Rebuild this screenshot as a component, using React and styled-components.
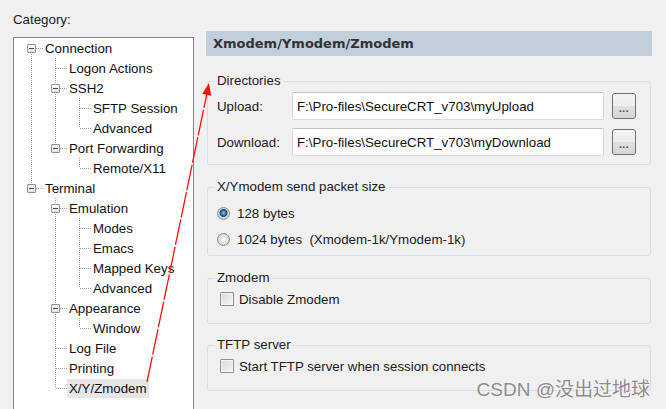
import React from 'react';
import styled, { createGlobalStyle } from 'styled-components';

const GlobalStyle = createGlobalStyle`
  html, body {
    margin: 0;
    padding: 0;
    background: #f0f0f0;
    overflow: hidden;
  }
  body {
    font-family: "Liberation Sans", Arial, sans-serif;
    font-size: 13.3px;
    color: #1b1b1b;
  }
`;

const Window = styled.div`
  position: relative;
  width: 666px;
  height: 409px;
  box-sizing: border-box;
  padding: 12px 0 0 13px;
  display: grid;
  grid-template-columns: 181px 446px;
  column-gap: 12px;
  align-items: start;
  overflow: hidden;
`;

const LeftColumn = styled.div`
  display: flex;
  flex-direction: column;
`;

const Caption = styled.div`
  line-height: 16px;
  height: 16px;
`;

const TreeBox = styled.div`
  margin-top: 9px;
  height: 390px;
  background: #fff;
  border: 1px solid #828790;
  box-sizing: border-box;
`;

const TreeRow = styled.div`
  display: flex;
  align-items: center;
  height: 20px;
  padding-left: 5px;
`;

const dotsV = 'repeating-linear-gradient(to bottom, #a0a0a0 0 1px, transparent 1px 2px)';
const dotsH = 'repeating-linear-gradient(to right, #a0a0a0 0 1px, transparent 1px 2px)';

const Guide = styled.span`
  flex: none;
  width: 24px;
  height: 20px;
  background: ${p => (p.$line ? dotsV : 'none')};
  background-size: 1px 100%;
  background-repeat: no-repeat;
  background-position: 12px 0;
`;

const Connector = styled.span`
  position: relative;
  flex: none;
  width: 24px;
  height: 20px;
  &::before {
    content: '';
    position: absolute;
    left: 12px;
    width: 1px;
    top: ${p => (p.$first ? '10px' : '0')};
    bottom: ${p => (p.$last ? '10px' : '0')};
    background: ${dotsV};
  }
  &::after {
    content: '';
    position: absolute;
    left: 13px;
    right: 0;
    top: 10px;
    height: 1px;
    background: ${dotsH};
  }
`;

const Expander = styled.span`
  position: absolute;
  z-index: 1;
  left: 8px;
  top: 6px;
  width: 7px;
  height: 7px;
  border: 1px solid #919191;
  border-radius: 1px;
  background: linear-gradient(#ffffff, #e2e2e2);
  &::after {
    content: '';
    position: absolute;
    left: 1px;
    top: 3px;
    width: 5px;
    height: 1px;
    background: #2c4a6e;
  }
`;

const NodeLabel = styled.span`
  padding: 0 2px;
  line-height: 19px;
  color: #111;
  white-space: nowrap;
  background: ${p => (p.$selected ? '#e6e6e6' : 'transparent')};
`;

const RightColumn = styled.div`
  display: flex;
  flex-direction: column;
  margin-top: 19px;
`;

const PageHeader = styled.div`
  height: 25px;
  line-height: 25px;
  padding-left: 7px;
  background: #c1cedb;
  font-family: "DejaVu Sans", Verdana, sans-serif;
  font-weight: bold;
  font-size: 13px;
  color: #333;
`;

const GroupBox = styled.section`
  margin: ${p => p.$top}px 1px 0 1px;
  padding: 0 14px ${p => p.$pb}px 9px;
  border: 1px solid #d5dfe5;
  border-radius: 3px;
`;

const GroupTitle = styled.div`
  display: table;
  margin: -9px 0 0 -2px;
  padding: 0 2px;
  line-height: 16px;
  background: #f0f0f0;
  color: #1b1b1b;
`;

const GroupBody = styled.div`
  padding-top: ${p => p.$pt}px;
`;

const PathRow = styled.div`
  display: grid;
  grid-template-columns: 67px 312px 24px;
  column-gap: 8px;
  align-items: center;
  & + & {
    margin-top: 8px;
  }
`;

const FieldLabel = styled.label`
  color: #1b1b1b;
`;

const PathInput = styled.input`
  box-sizing: border-box;
  height: 28px;
  width: 100%;
  margin: 0;
  padding: 0 4px;
  border: 1px solid #dadada;
  border-top-color: #c4c4c4;
  border-radius: 2px;
  background: #fff;
  font: inherit;
  color: #111;
  outline: none;
`;

const BrowseButton = styled.button`
  box-sizing: border-box;
  width: 24px;
  height: 26px;
  margin: 0;
  padding: 0 0 4px;
  border: 1px solid #707070;
  border-radius: 3px;
  background: linear-gradient(#f4f4f4, #eeeeee 50%, #e0e0e0 50%, #d6d6d6);
  font-family: "Liberation Sans", Arial, sans-serif;
  font-size: 10px;
  font-weight: bold;
  letter-spacing: 0.5px;
  color: #3a3f6a;
  display: flex;
  align-items: flex-end;
  justify-content: center;
`;

const OptionRow = styled.label`
  display: flex;
  align-items: center;
  height: 20px;
  white-space: pre;
  color: #1b1b1b;
  & + & {
    margin-top: 6px;
  }
`;

const Radio = styled.input.attrs({ type: 'radio' })`
  appearance: none;
  flex: none;
  width: 13px;
  height: 13px;
  margin: 0 7px 0 0;
  border: 1px solid #8c8c8c;
  border-radius: 50%;
  background: radial-gradient(circle, #f6f6f6 0, #e6e6e6 3px, #d4d4d4 6px);
  &:checked {
    background: radial-gradient(circle at 50% 45%, #7fd0ff 0, #2b7fc0 2px, #15466f 3.5px, #dcdcdc 4.5px, #d2d2d2 6px);
  }
`;

const Check = styled.input.attrs({ type: 'checkbox' })`
  appearance: none;
  flex: none;
  width: 14px;
  height: 14px;
  margin: 0 5px 0 3px;
  border: 1px solid #8e8f8f;
  border-radius: 1px;
  background: linear-gradient(135deg, #dcdcdc, #f4f4f4);
  box-shadow: inset 0 0 0 1px #f4f4f4;
`;

const Watermark = styled.div`
  position: absolute;
  right: 16px;
  bottom: 8px;
  font-family: "Liberation Sans", "Noto Sans CJK SC", sans-serif;
  font-size: 19px;
  color: rgba(110, 110, 110, 0.8);
  text-shadow: 0 0 2px #fff;
  white-space: nowrap;
`;

const Overlay = styled.svg`
  position: absolute;
  left: 0;
  top: 0;
  pointer-events: none;
`;

const tree = [
  {
    label: 'Connection',
    children: [
      { label: 'Logon Actions' },
      { label: 'SSH2', children: [{ label: 'SFTP Session' }, { label: 'Advanced' }] },
      { label: 'Port Forwarding', children: [{ label: 'Remote/X11' }] },
    ],
  },
  {
    label: 'Terminal',
    children: [
      {
        label: 'Emulation',
        children: [{ label: 'Modes' }, { label: 'Emacs' }, { label: 'Mapped Keys' }, { label: 'Advanced' }],
      },
      { label: 'Appearance', children: [{ label: 'Window' }] },
      { label: 'Log File' },
      { label: 'Printing' },
      { label: 'X/Y/Zmodem', selected: true },
    ],
  },
];

// flatten the tree into rows, remembering which ancestor lines keep going
function flatten(nodes, level = 0, guides = [], out = []) {
  nodes.forEach((node, i) => {
    const last = i === nodes.length - 1;
    out.push({ node, level, guides, first: level === 0 && i === 0, last });
    if (node.children) flatten(node.children, level + 1, [...guides, !last], out);
  });
  return out;
}

const rows = flatten(tree);

function CategoryTree() {
  return (
    <TreeBox>
      {rows.map((r, i) => (
        <TreeRow key={i}>
          {r.guides.map((g, j) => (
            <Guide key={j} $line={g} />
          ))}
          <Connector $first={r.first} $last={r.last}>
            {r.node.children && <Expander />}
          </Connector>
          <NodeLabel $selected={r.node.selected}>{r.node.label}</NodeLabel>
        </TreeRow>
      ))}
    </TreeBox>
  );
}

function Group({ title, top, pt, pb, children }) {
  return (
    <GroupBox $top={top} $pb={pb}>
      <GroupTitle>{title}</GroupTitle>
      <GroupBody $pt={pt}>{children}</GroupBody>
    </GroupBox>
  );
}

function Arrow() {
  return (
    <Overlay width="666" height="409" viewBox="0 0 666 409">
      <line x1="147" y1="382" x2="206.8" y2="94" stroke="#ff1010" strokeWidth="1.3" strokeDasharray="26 2" />
      <polygon points="209,83 211.2,95.8 202.2,93.8" fill="#ff1010" />
    </Overlay>
  );
}

export default function App() {
  return (
    <>
      <GlobalStyle />
      <Window>
        <LeftColumn>
          <Caption>Category:</Caption>
          <CategoryTree />
        </LeftColumn>
        <RightColumn>
          <PageHeader>Xmodem/Ymodem/Zmodem</PageHeader>

          <Group title="Directories" top={25} pt={3} pb={8}>
            <PathRow>
              <FieldLabel>Upload:</FieldLabel>
              <PathInput readOnly value={'F:\\Pro-files\\SecureCRT_v703\\myUpload'} />
              <BrowseButton>...</BrowseButton>
            </PathRow>
            <PathRow>
              <FieldLabel>Download:</FieldLabel>
              <PathInput readOnly value={'F:\\Pro-files\\SecureCRT_v703\\myDownload'} />
              <BrowseButton>...</BrowseButton>
            </PathRow>
          </Group>

          <Group title="X/Ymodem send packet size" top={22} pt={8} pb={6}>
            <OptionRow>
              <Radio name="pkt" defaultChecked />
              128 bytes
            </OptionRow>
            <OptionRow>
              <Radio name="pkt" />
              {'1024 bytes  (Xmodem-1k/Ymodem-1k)'}
            </OptionRow>
          </Group>

          <Group title="Zmodem" top={22} pt={3} pb={14}>
            <OptionRow>
              <Check />
              Disable Zmodem
            </OptionRow>
          </Group>

          <Group title="TFTP server" top={21} pt={3} pb={14}>
            <OptionRow>
              <Check />
              Start TFTP server when session connects
            </OptionRow>
          </Group>
        </RightColumn>
        <Watermark>CSDN @没出过地球</Watermark>
        <Arrow />
      </Window>
    </>
  );
}
